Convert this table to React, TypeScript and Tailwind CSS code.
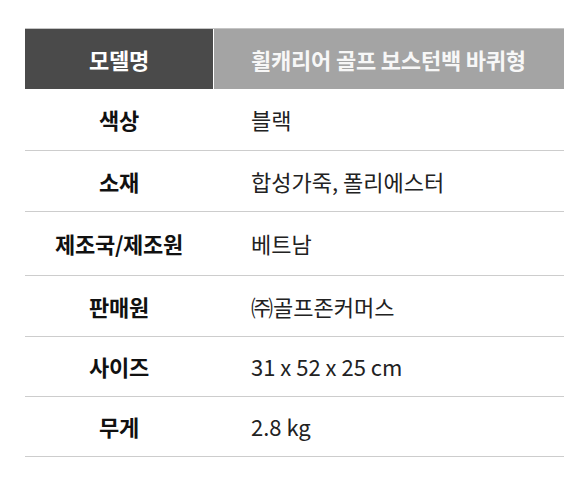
import React from "react";

const rows: { label: string; value: string; h: string }[] = [
  { label: "색상", value: "블랙", h: "h-[62px]" },
  { label: "소재", value: "합성가죽, 폴리에스터", h: "h-[61px]" },
  { label: "제조국/제조원", value: "베트남", h: "h-[64px]" },
  { label: "판매원", value: "㈜골프존커머스", h: "h-[61px]" },
  { label: "사이즈", value: "31 x 52 x 25 cm", h: "h-[60px]" },
  { label: "무게", value: "2.8 kg", h: "h-[60px]" },
];

export default function App() {
  return (
    <div className="w-[564px] h-[479px] bg-white overflow-hidden pt-[28px] pl-[25px] font-['Noto_Sans_CJK_KR','Noto_Sans',sans-serif]">
      <div className="w-[539px]">
        <div className="flex h-[61px] border-t border-[#c4c4c4]">
          <div className="w-[188px] bg-[#4a4a4a] flex items-center justify-center text-white font-bold text-[22px] tracking-[-0.3px]">
            모델명
          </div>
          <div className="flex-1 bg-[#a4a4a4] border-l border-white flex items-center pl-[37px] text-[#f7f7f7] font-bold text-[22px] tracking-[-0.2px] whitespace-nowrap">
            휠캐리어 골프 보스턴백 바퀴형
          </div>
        </div>
        {rows.map((r) => (
          <div key={r.label} className={`flex ${r.h} border-b-[1.5px] border-[#cdcdcd]`}>
            <div className="w-[188px] flex items-center justify-center text-[#111] font-bold text-[22px] tracking-[-0.3px]">
              {r.label}
            </div>
            <div className="flex-1 flex items-center pl-[38px] text-[#222] text-[22px] whitespace-nowrap">
              {r.value}
            </div>
          </div>
        ))}
      </div>
    </div>
  );
}
